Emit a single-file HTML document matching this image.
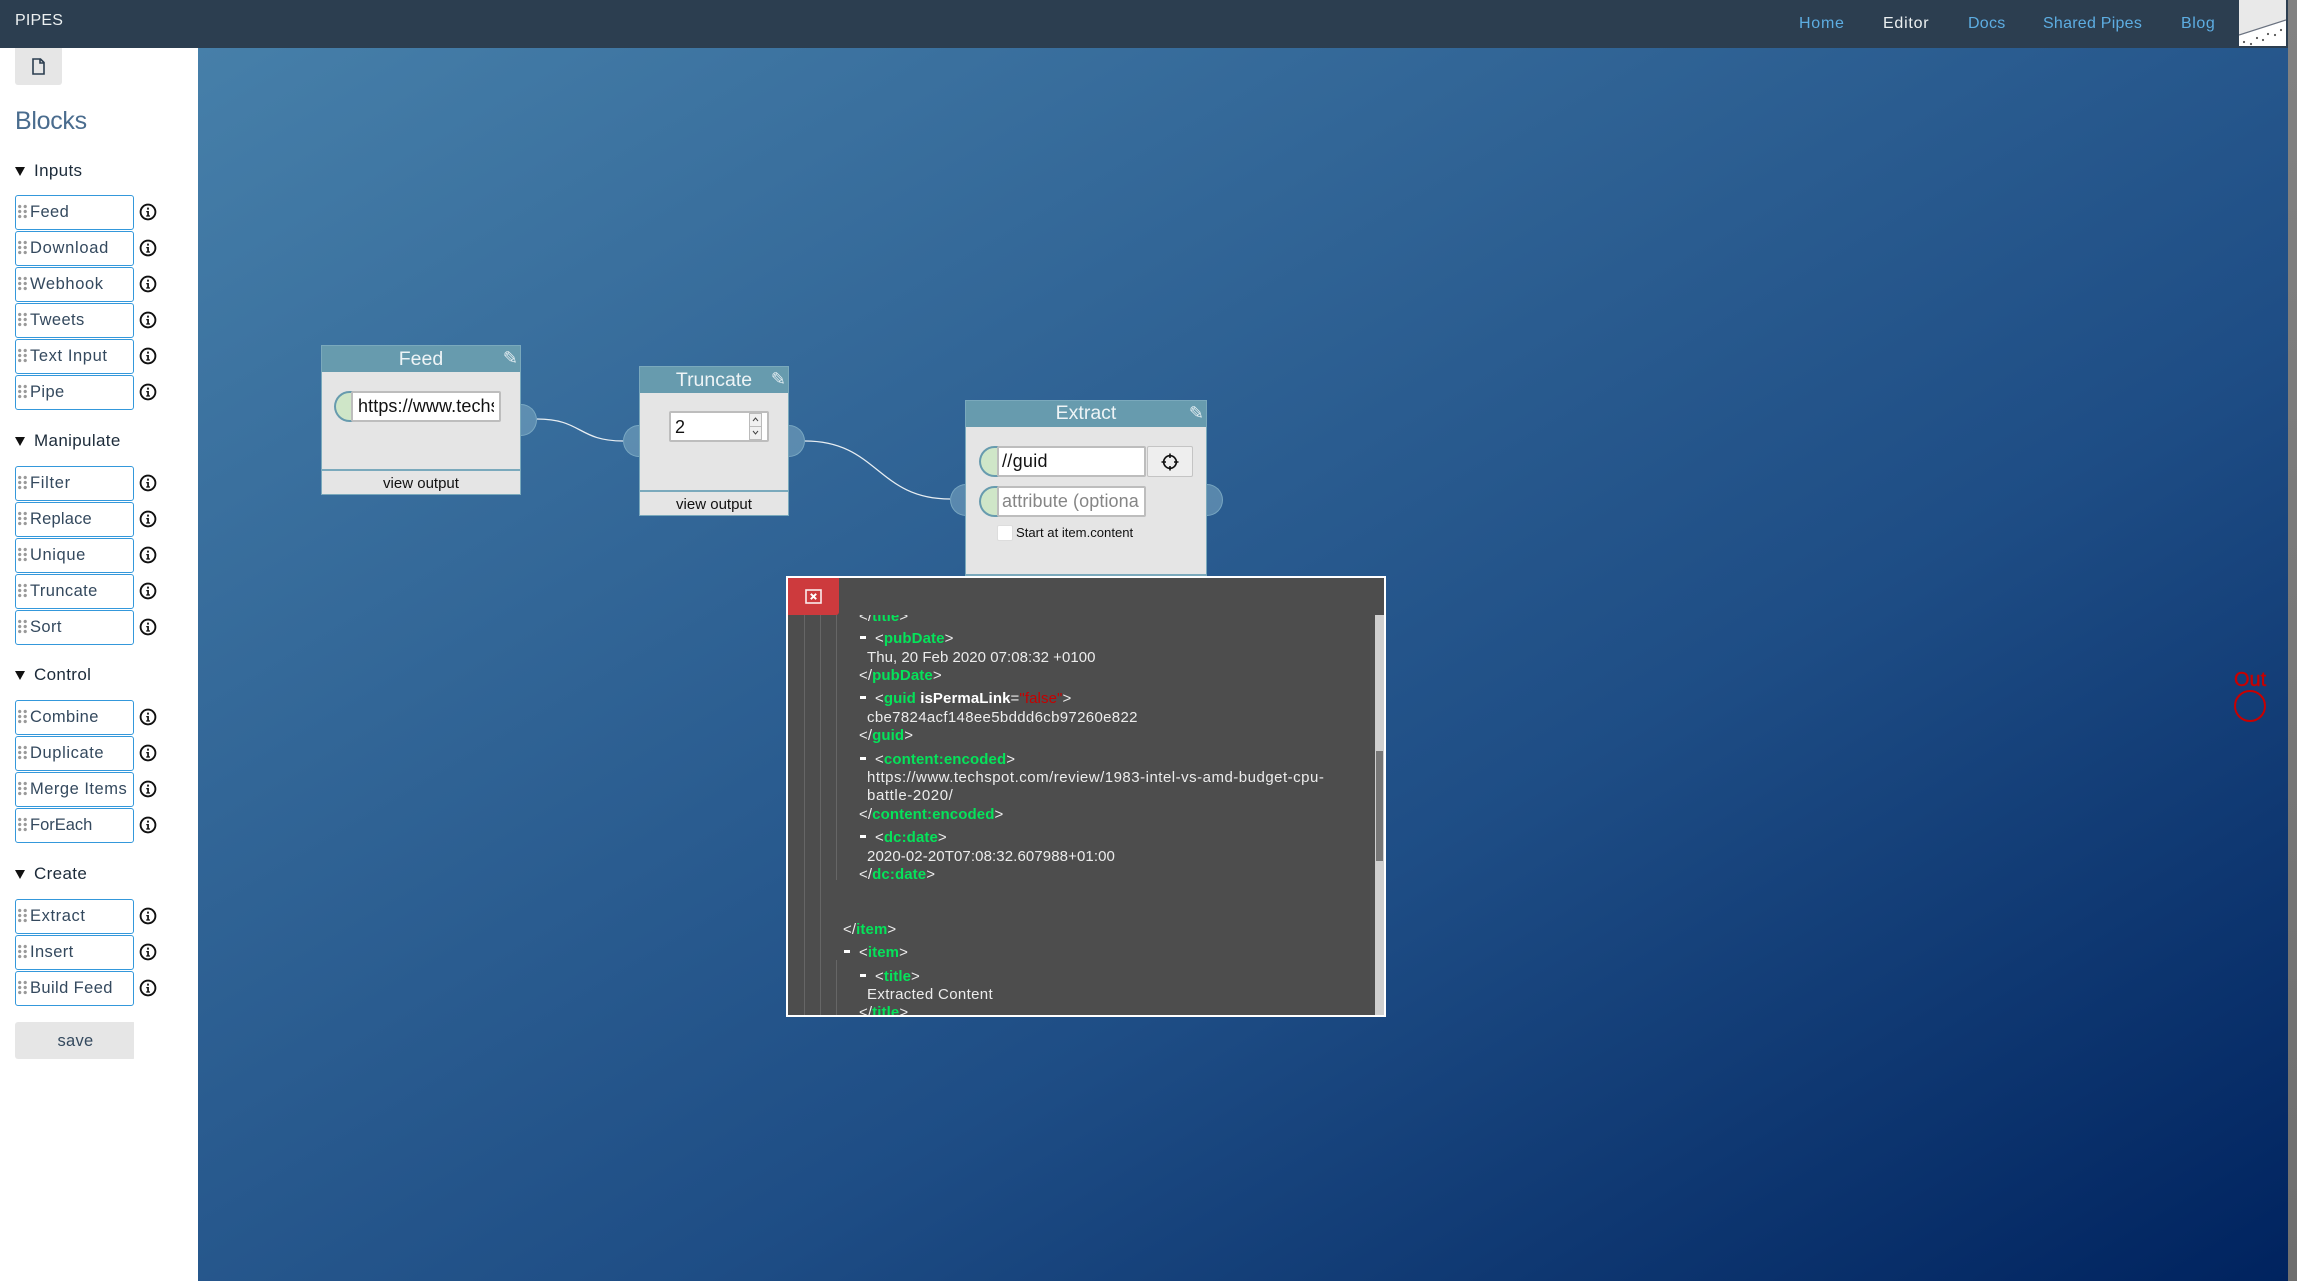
<!DOCTYPE html>
<html><head><meta charset="utf-8"><title>Pipes</title>
<style>
html,body{margin:0;padding:0;width:2297px;height:1281px;overflow:hidden;background:#fff;font-family:"Liberation Sans",sans-serif}
div,span{box-sizing:border-box}
.a{position:absolute;white-space:nowrap}
#bg{position:absolute;left:198px;top:48px;width:2090px;height:1233px;background:linear-gradient(to bottom right,#467fa9 0%,#1e4d85 62%,#00235f 100%)}
#hd{position:absolute;left:0;top:0;width:2288px;height:48px;background:#2c3e50}
#sb{position:absolute;left:2288px;top:0;width:9px;height:1281px;background:linear-gradient(#828282,#6e6e6e)}
.nav{position:absolute;top:13px;line-height:22px;font-size:16px;color:#5dade2;letter-spacing:.25px;white-space:nowrap}
.h{position:absolute;left:34px;font-size:17px;line-height:22px;color:#1c2b3a;letter-spacing:.35px;white-space:nowrap}
.tri{position:absolute;left:15px;width:0;height:0;border-left:5.5px solid transparent;border-right:5.5px solid transparent;border-top:9px solid #111}
.b{position:absolute;left:15px;width:119px;height:35px;border:1px solid #3498db;border-radius:3px;background:#fff;color:#34495e;font-size:16.5px;line-height:33px;padding-left:14px;letter-spacing:.4px;white-space:nowrap}
.b:before{content:"";position:absolute;left:1px;top:8px;width:11px;height:15px;background:radial-gradient(circle at 2.7px 2.5px,#999 1.4px,transparent 1.9px) 0 0/5.5px 5px}
.i{position:absolute;left:139px;width:18px;height:18px}
.n{position:absolute;background:#e5e5e5;border:1px solid #7aa9bc}
.nh{position:absolute;left:0;top:0;right:0;height:26px;background:#679bae;color:#eef4f6;font-size:19.5px;line-height:27px;text-align:center}
.pen{position:absolute;right:2px;top:1px;font-family:"DejaVu Sans",sans-serif;font-size:18px;line-height:24px;color:#e4eef2}
.nf{position:absolute;left:0;right:0;bottom:0;height:25px;border-top:2px solid #7aa9bc;font-size:15px;line-height:25px;text-align:center;color:#111}
.port{position:absolute;width:32px;height:32px;border-radius:50%;background:rgba(125,170,195,.55);border:1.5px solid rgba(140,185,205,.6)}
.sc{position:absolute;width:36px;height:31px;border-radius:16px 0 0 16px;background:#cfe6c8;border:2px solid #679bae;border-right:none}
.in{position:absolute;height:31px;background:#fff;border:2px solid #bdbdbd;border-radius:2px;font-size:18px;line-height:27px;color:#111;padding-left:3px;overflow:hidden;white-space:nowrap}
#md{position:absolute;left:786px;top:576px;width:600px;height:441px;background:#4d4d4d;border:2px solid #fff}
#cl{position:absolute;left:0;top:37px;width:587px;height:400px;overflow:hidden;font-size:15px;color:#ececec;letter-spacing:.1px}
.l{position:absolute;height:18px;line-height:20px;white-space:nowrap}
.l b{color:#05e35a;font-weight:bold}
.l i{color:#fff;font-weight:bold;font-style:normal}
.l u{color:#c60000;text-decoration:none}
.d{position:absolute;width:6px;height:3px;background:#fff}
.v{position:absolute;width:1px;background:#666}
</style></head><body>
<div id="bg"></div>
<div id="hd">
<div class="a" style="left:15px;top:10px;line-height:22px;font-size:16px;color:#ecf0f1;letter-spacing:.2px">PIPES</div>
<div class="nav" style="left:1799px;letter-spacing:.75px">Home</div>
<div class="nav" style="left:1883px;color:#ecf0f1;letter-spacing:.75px">Editor</div>
<div class="nav" style="left:1968px">Docs</div>
<div class="nav" style="left:2043px">Shared Pipes</div>
<div class="nav" style="left:2181px;letter-spacing:.6px">Blog</div>
<svg class="a" style="left:2239px;top:0" width="47" height="46" viewBox="0 0 47 46"><rect width="47" height="46" fill="#e9e9e9"/><path d="M0 35L47 20V46H0Z" fill="#fff"/><path d="M0 35L47 20" stroke="#6a7280" stroke-width="1.2"/><g fill="#555"><circle cx="5" cy="42" r="1.1"/><circle cx="12" cy="44" r="1.1"/><circle cx="18" cy="38" r="1.1"/><circle cx="24" cy="40" r="1.1"/><circle cx="29" cy="34" r="1.1"/><circle cx="36" cy="35" r="1.1"/><circle cx="42" cy="30" r="1.1"/></g></svg>
</div>
<div id="sb"></div>

<div class="a" style="left:15px;top:48px;width:47px;height:37px;background:#e6e6e6;border-radius:0 0 3px 3px"></div>
<svg class="a" style="left:32px;top:58px" width="13" height="17" viewBox="0 0 13 17"><path d="M1 1H8.5L12 4.5V16H1Z M8 1V5H12" fill="none" stroke="#2c3e50" stroke-width="1.6"/></svg>
<div class="a" style="left:15px;top:106px;font-size:25px;line-height:30px;color:#4a6c8e;letter-spacing:-.3px">Blocks</div>

<div class="tri" style="top:167px"></div><div class="h" style="top:160px">Inputs</div>
<div class="b" style="top:195px">Feed</div>
<div class="b" style="top:231px;letter-spacing:.7px">Download</div>
<div class="b" style="top:267px;letter-spacing:.6px">Webhook</div>
<div class="b" style="top:303px">Tweets</div>
<div class="b" style="top:339px;letter-spacing:.6px">Text Input</div>
<div class="b" style="top:375px">Pipe</div>

<div class="tri" style="top:437px"></div><div class="h" style="top:430px">Manipulate</div>
<div class="b" style="top:466px;letter-spacing:.7px">Filter</div>
<div class="b" style="top:502px;letter-spacing:.2px">Replace</div>
<div class="b" style="top:538px;letter-spacing:.6px">Unique</div>
<div class="b" style="top:574px">Truncate</div>
<div class="b" style="top:610px">Sort</div>

<div class="tri" style="top:671px"></div><div class="h" style="top:664px">Control</div>
<div class="b" style="top:700px">Combine</div>
<div class="b" style="top:736px;letter-spacing:.6px">Duplicate</div>
<div class="b" style="top:772px;letter-spacing:.5px">Merge Items</div>
<div class="b" style="top:808px;letter-spacing:0">ForEach</div>

<div class="tri" style="top:870px"></div><div class="h" style="top:863px">Create</div>
<div class="b" style="top:899px;letter-spacing:.6px">Extract</div>
<div class="b" style="top:935px">Insert</div>
<div class="b" style="top:971px">Build Feed</div>

<svg width="0" height="0" style="position:absolute"><symbol id="inf" viewBox="0 0 18 18"><circle cx="9" cy="9" r="7.4" fill="none" stroke="#111" stroke-width="1.9"/><path d="M7.3 8H9.9V12.4H11V13.6H7.2V12.4H8.2V9.2H7.3Z M8.1 4.6H9.9V6.6H8.1Z" fill="#111"/></symbol></svg>
<svg class="i" style="top:203px"><use href="#inf"/></svg>
<svg class="i" style="top:239px"><use href="#inf"/></svg>
<svg class="i" style="top:275px"><use href="#inf"/></svg>
<svg class="i" style="top:311px"><use href="#inf"/></svg>
<svg class="i" style="top:347px"><use href="#inf"/></svg>
<svg class="i" style="top:383px"><use href="#inf"/></svg>
<svg class="i" style="top:474px"><use href="#inf"/></svg>
<svg class="i" style="top:510px"><use href="#inf"/></svg>
<svg class="i" style="top:546px"><use href="#inf"/></svg>
<svg class="i" style="top:582px"><use href="#inf"/></svg>
<svg class="i" style="top:618px"><use href="#inf"/></svg>
<svg class="i" style="top:708px"><use href="#inf"/></svg>
<svg class="i" style="top:744px"><use href="#inf"/></svg>
<svg class="i" style="top:780px"><use href="#inf"/></svg>
<svg class="i" style="top:816px"><use href="#inf"/></svg>
<svg class="i" style="top:907px"><use href="#inf"/></svg>
<svg class="i" style="top:943px"><use href="#inf"/></svg>
<svg class="i" style="top:979px"><use href="#inf"/></svg>

<div class="a" style="left:15px;top:1022px;width:121px;height:37px;background:linear-gradient(90deg,#e6e6e6 119px,#fff 119px);border-radius:3px;text-align:center;font-size:16.5px;line-height:38px;color:#34495e;letter-spacing:.3px">save</div>

<svg class="a" style="left:0;top:0;pointer-events:none" width="2297" height="1281"><g fill="none" stroke="#e8eef2" stroke-width="1.3"><path d="M537 419C582 419 578 441 623 441"/><path d="M805 441C878 441 877 499 950 499"/></g></svg>

<div class="port" style="left:505px;top:404px"></div>
<div class="port" style="left:623px;top:425px"></div>
<div class="port" style="left:773px;top:425px"></div>
<div class="port" style="left:950px;top:484px"></div>
<div class="port" style="left:1191px;top:484px"></div>

<div class="n" style="left:321px;top:345px;width:200px;height:150px"><div class="nh">Feed<span class="pen">✎</span></div><div class="nf">view output</div></div>
<div class="sc" style="left:334px;top:391px"></div>
<div class="in" style="left:351px;top:391px;width:150px;letter-spacing:.1px;padding-left:5px"><span style="display:block;width:136px;overflow:hidden">https://www.techspot.com/feed</span></div>

<div class="n" style="left:639px;top:366px;width:150px;height:150px"><div class="nh">Truncate<span class="pen">✎</span></div><div class="nf">view output</div></div>
<div class="in" style="left:669px;top:411px;width:100px;padding-left:4px;line-height:28px">2</div>
<svg class="a" style="left:749px;top:413px" width="18" height="27" viewBox="0 0 18 27"><rect x=".5" y=".5" width="12" height="26" fill="#f0f0f0" stroke="#bbb"/><path d="M.5 13.5H12.5" stroke="#bbb"/><path d="M4 8L6.5 5L9 8M4 18L6.5 21L9 18" fill="none" stroke="#444" stroke-width="1"/></svg>

<div class="n" style="left:965px;top:400px;width:242px;height:176px;border-bottom-width:2px"><div class="nh" style="line-height:25px">Extract<span class="pen">✎</span></div></div>
<div class="sc" style="left:979px;top:446px"></div>
<div class="sc" style="left:979px;top:486px"></div>
<div class="in" style="left:997px;top:446px;width:149px;letter-spacing:.3px">//guid</div>
<div class="in" style="left:997px;top:486px;width:149px;color:#858585;letter-spacing:.1px">attribute (optiona</div>
<div class="a" style="left:1147px;top:446px;width:46px;height:31px;background:#eee;border:1px solid #c4c4c4;border-radius:2px"></div>
<svg class="a" style="left:1160px;top:452px" width="20" height="20" viewBox="0 0 20 20"><circle cx="10" cy="10" r="6.3" fill="none" stroke="#111" stroke-width="1.7"/><path d="M10 1.5V6M10 14V18.5M1.5 10H6M14 10H18.5" stroke="#111" stroke-width="1.6"/></svg>
<div class="a" style="left:997px;top:525px;width:16px;height:16px;background:#fff;border:1px solid #ddd;border-radius:2px"></div>
<div class="a" style="left:1016px;top:525px;font-size:13.1px;line-height:16px;color:#111">Start at item.content</div>

<div id="md">
<div class="a" style="left:0;top:0;width:51px;height:37px;background:#cd3a3d;border-radius:0 0 3px 0"></div>
<svg class="a" style="left:17px;top:11px" width="17" height="15" viewBox="0 0 17 15"><rect x="1" y="1" width="15" height="13" fill="none" stroke="#fff" stroke-width="1.6" opacity=".9"/><path d="M5.8 4.8L11.2 10.2M11.2 4.8L5.8 10.2" stroke="#fff" stroke-width="2"/></svg>
<div class="v" style="left:16px;top:37px;height:400px"></div>
<div class="v" style="left:32px;top:37px;height:400px"></div>
<div class="v" style="left:48px;top:37px;height:265px"></div>
<div class="v" style="left:48px;top:382px;height:55px"></div>
<div id="cl">
<div class="l" style="left:71px;top:-8px">&lt;/<b>title</b>&gt;</div>
<div class="d" style="left:72px;top:21px"></div><div class="l" style="left:87px;top:14px">&lt;<b>pubDate</b>&gt;</div>
<div class="l" style="left:79px;top:33px;letter-spacing:.04px">Thu, 20 Feb 2020 07:08:32 +0100</div>
<div class="l" style="left:71px;top:51px">&lt;/<b>pubDate</b>&gt;</div>
<div class="d" style="left:72px;top:81px"></div><div class="l" style="left:87px;top:74px">&lt;<b>guid</b> <i>isPermaLink</i>=<u>"false"</u>&gt;</div>
<div class="l" style="left:79px;top:93px;letter-spacing:.33px">cbe7824acf148ee5bddd6cb97260e822</div>
<div class="l" style="left:71px;top:111px">&lt;/<b>guid</b>&gt;</div>
<div class="d" style="left:72px;top:142px"></div><div class="l" style="left:87px;top:135px">&lt;<b>content:encoded</b>&gt;</div>
<div class="l" style="left:79px;top:153px;letter-spacing:.5px">https://www.techspot.com/review/1983-intel-vs-amd-budget-cpu-</div>
<div class="l" style="left:79px;top:171px;letter-spacing:.6px">battle-2020/</div>
<div class="l" style="left:71px;top:190px">&lt;/<b>content:encoded</b>&gt;</div>
<div class="d" style="left:72px;top:220px"></div><div class="l" style="left:87px;top:213px">&lt;<b>dc:date</b>&gt;</div>
<div class="l" style="left:79px;top:232px">2020-02-20T07:08:32.607988+01:00</div>
<div class="l" style="left:71px;top:250px">&lt;/<b>dc:date</b>&gt;</div>
<div class="l" style="left:55px;top:305px">&lt;/<b>item</b>&gt;</div>
<div class="d" style="left:56px;top:335px"></div><div class="l" style="left:71px;top:328px">&lt;<b>item</b>&gt;</div>
<div class="d" style="left:72px;top:359px"></div><div class="l" style="left:87px;top:352px">&lt;<b>title</b>&gt;</div>
<div class="l" style="left:79px;top:370px;letter-spacing:.35px">Extracted Content</div>
<div class="l" style="left:71px;top:388px">&lt;/<b>title</b>&gt;</div>
</div>
<div class="a" style="left:587px;top:37px;width:9px;height:400px;background:#cfcfcf"></div>
<div class="a" style="left:588px;top:173px;width:7px;height:110px;background:#777"></div>
</div>

<div class="a" style="left:2234px;top:670px;font-size:20px;line-height:20px;color:#c80000;-webkit-text-stroke:.4px #c80000">Out</div>
<div class="a" style="left:2234px;top:690px;width:32px;height:32px;border:2.5px solid #c80000;border-radius:50%"></div>
</body></html>
